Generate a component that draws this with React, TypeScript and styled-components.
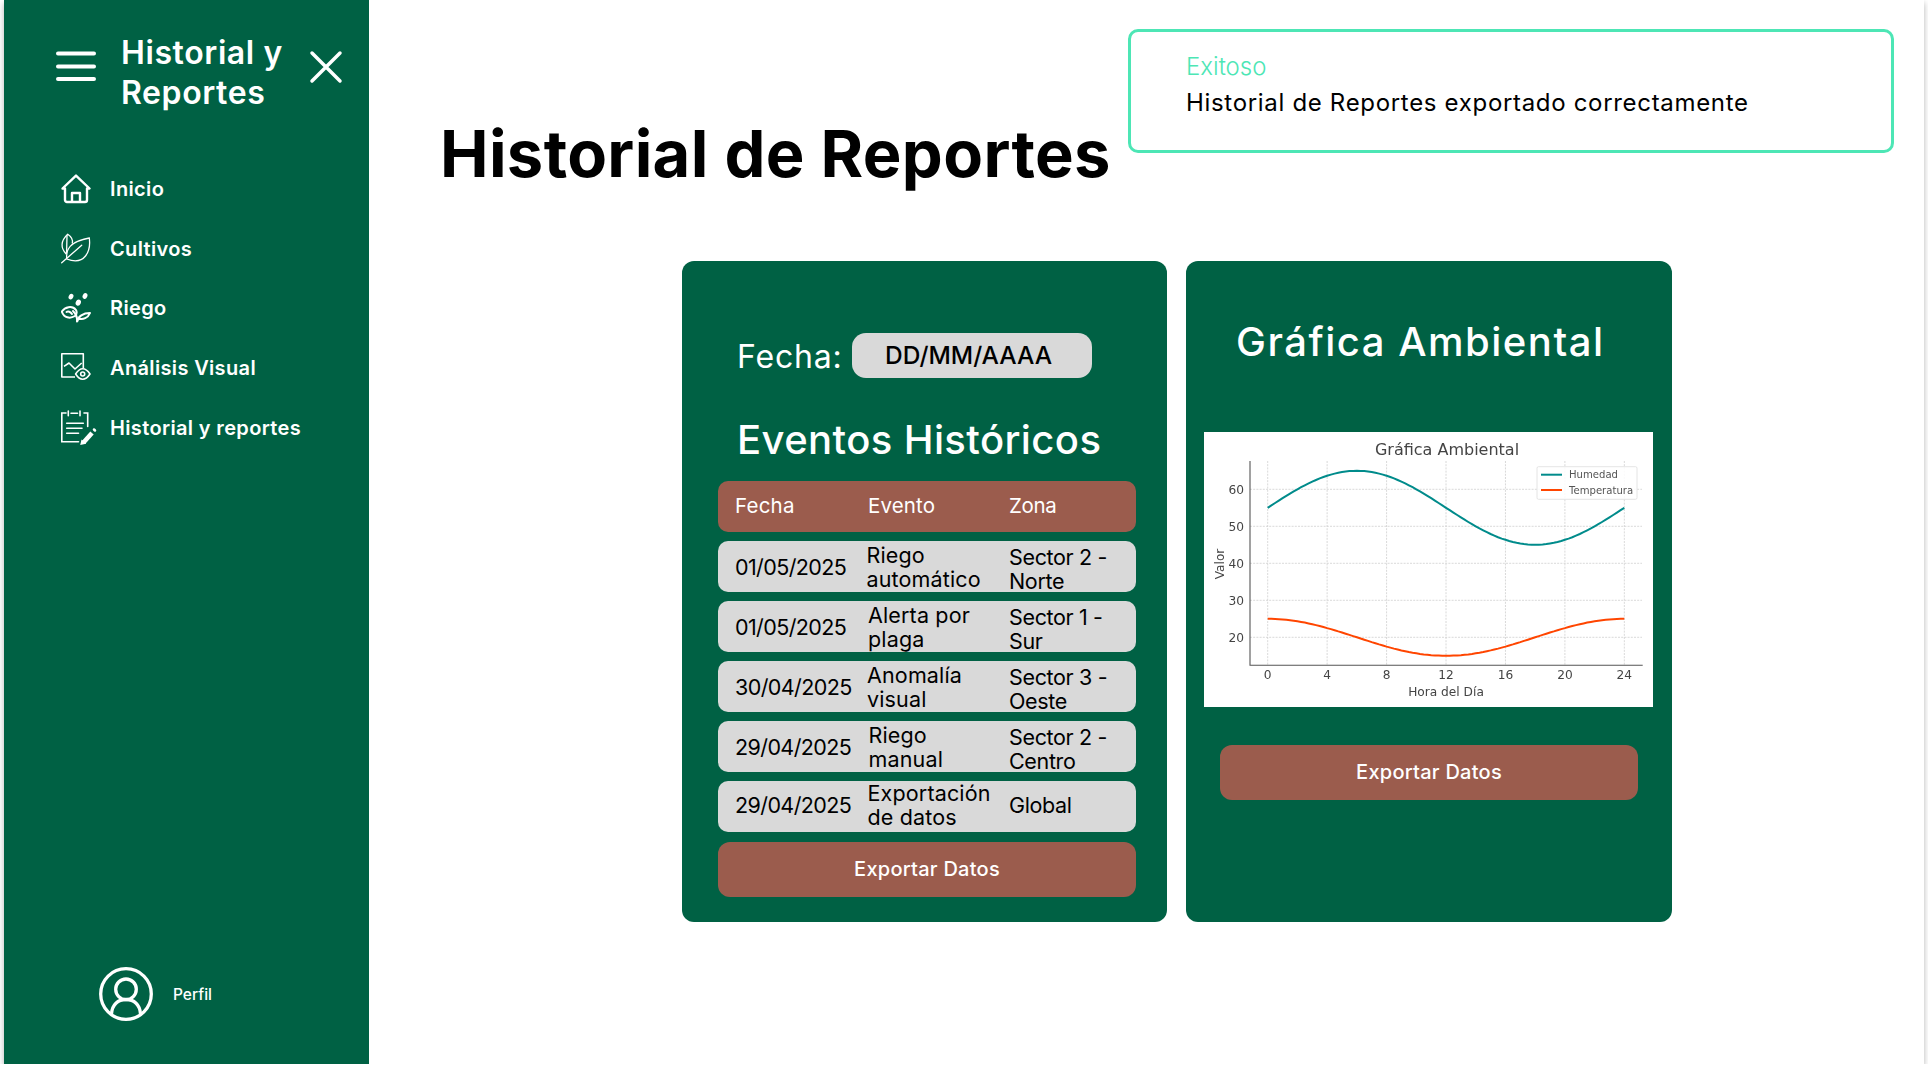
import * as React from 'react'
import styled, { createGlobalStyle } from 'styled-components'

const GlobalStyle = createGlobalStyle`
  html, body {
    margin: 0;
    background: #fff;
  }
  body {
    font-family: Inter, "Noto Sans", sans-serif;
    color: #000;
  }
`

const GREEN = '#006144'
const BROWN = '#9b5c4d'
const GREY = '#d9d9d9'
const MINT = '#4de6b5'

const Screen = styled.div`
  display: flex;
  width: 1920px;
  height: 1064px;
  margin-left: 4px;
  background: #fff;
  box-shadow: 0 3px 6px rgba(0, 0, 0, 0.3);
  position: relative;
`

const Sidebar = styled.aside`
  width: 365px;
  flex: none;
  background: ${GREEN};
  color: #fff;
  display: flex;
  flex-direction: column;
`

const SideHeader = styled.header`
  display: flex;
  align-items: flex-start;
  padding: 33px 0 0 52px;
`

const SideTitle = styled.div`
  width: 188px;
  margin-left: 25px;
  font-size: 32px;
  line-height: 40px;
  font-weight: 600;
  letter-spacing: 0.6px;
`

const MenuButton = styled.svg`
  width: 40px;
  height: 34px;
  margin-top: 16px;
  flex: none;
`

const CloseButton = styled.svg`
  width: 34px;
  height: 34px;
  margin-top: 17px;
  flex: none;
`

const Nav = styled.nav`
  display: flex;
  flex-direction: column;
  margin-top: 46px;
`

const NavItem = styled.a`
  display: flex;
  align-items: center;
  height: 59.8px;
  padding-left: 57px;
  font-size: 20px;
  font-weight: 600;
  letter-spacing: 0.35px;
`

const NavIcon = styled.span`
  width: 49px;
  flex: none;
  display: flex;
  align-items: center;
`

const Profile = styled.div`
  margin-top: auto;
  margin-bottom: 43px;
  padding-left: 95px;
  display: flex;
  align-items: center;
  gap: 20px;
  font-size: 15.5px;
  font-weight: 500;
`

const Main = styled.main`
  flex: 1;
  display: flex;
  flex-direction: column;
  padding: 115px 0 0 71px;
`

const PageTitle = styled.h1`
  margin: 0;
  font-size: 65px;
  line-height: 78px;
  font-weight: 700;
  letter-spacing: 0.35px;
`

const Toast = styled.div`
  position: absolute;
  top: 29px;
  left: 1124px;
  width: 766px;
  height: 124px;
  box-sizing: border-box;
  border: 3px solid ${MINT};
  border-radius: 10px;
  padding: 17px 0 0 55px;
  font-size: 24px;
  line-height: 36px;
`

const ToastTitle = styled.div`
  color: ${MINT};
  font-weight: 300;
`

const ToastMessage = styled.div`
  letter-spacing: 0.68px;
`

const Cards = styled.section`
  display: flex;
  gap: 19px;
  margin: 68px 0 0 242px;
`

const Card = styled.div<{ $width: number }>`
  width: ${p => p.$width}px;
  height: 661px;
  box-sizing: border-box;
  background: ${GREEN};
  border-radius: 12px;
  color: #fff;
  display: flex;
  flex-direction: column;
  align-items: flex-start;
`

const LeftCard = styled(Card)`
  padding: 72px 31px 0 36px;
`

const RightCard = styled(Card)`
  padding: 51px 0 0 18px;
`

const DateRow = styled.div`
  display: flex;
  align-items: flex-start;
  height: 45px;
  padding-left: 19px;
`

const DateLabel = styled.label`
  width: 115px;
  height: 45px;
  font-size: 32px;
  line-height: 47px;
  letter-spacing: 0.8px;
`

const DateInput = styled.div`
  width: 240px;
  height: 45px;
  box-sizing: border-box;
  padding-left: 33px;
  background: ${GREY};
  border-radius: 14px;
  color: #000;
  font-size: 24.5px;
  font-weight: 500;
  line-height: 45px;
`

const CardTitle = styled.h2<{ $indent: number; $top: number; $spacing: number }>`
  margin: ${p => p.$top}px 0 0 ${p => p.$indent}px;
  font-size: 40px;
  line-height: 60px;
  font-weight: 500;
  letter-spacing: ${p => p.$spacing}px;
`

const Table = styled.div`
  display: flex;
  flex-direction: column;
  gap: 9px;
  width: 418px;
  margin-top: 11px;
`

const TableRow = styled.div<{ $head?: boolean }>`
  display: grid;
  grid-template-columns: 131px 1fr 127px;
  align-items: center;
  height: 51px;
  box-sizing: border-box;
  padding: 0 0 ${p => (p.$head ? 2 : 4)}px 17px;
  border-radius: 10px;
  line-height: 24px;
  background: ${p => (p.$head ? BROWN : GREY)};
  color: ${p => (p.$head ? '#fff' : '#000')};
  font-size: ${p => (p.$head ? 20.5 : 21.5)}px;
`

const DateCell = styled.div<{ $head?: boolean }>`
  letter-spacing: ${p => (p.$head ? 0.2 : -0.6)}px;
`

const EventCell = styled.div<{ $shift: number }>`
  white-space: pre-line;
  margin-left: ${p => p.$shift}px;
  letter-spacing: 0.15px;
`

const ZoneCell = styled.div<{ $nudge?: boolean }>`
  white-space: pre-line;
  padding-top: ${p => (p.$nudge ? 4 : 0)}px;
  letter-spacing: -0.35px;
`

const ExportButton = styled.button`
  display: block;
  width: 418px;
  height: 55px;
  border: 0;
  border-radius: 12px;
  padding: 0 0 2px;
  background: ${BROWN};
  color: #fff;
  font-family: inherit;
  font-size: 20px;
  font-weight: 500;
  letter-spacing: 0.25px;
`

const TableButton = styled(ExportButton)`
  margin-top: 10px;
`

const ChartButton = styled(ExportButton)`
  margin: 38px 0 0 16px;
`

const ChartFrame = styled.svg`
  display: block;
  margin-top: 60px;
  width: 449px;
  height: 275px;
  background: #fff;
  font-family: "DejaVu Sans", sans-serif;
  filter: blur(0.3px);
`

const chartX = (hour: number) => 63.7 + hour * 14.86
const chartY = (value: number) => 57.3 + (60 - value) * 3.7

const curve = (fn: (t: number) => number) =>
  Array.from({ length: 97 }, (_, i) => {
    const t = i / 4
    return `${chartX(t).toFixed(1)},${chartY(fn(t)).toFixed(1)}`
  }).join(' ')

const Chart = () => (
  <ChartFrame viewBox="0 0 449 275">
    <g stroke="#cfcfcf" strokeWidth="0.8" strokeDasharray="2 1.2">
      {[0, 4, 8, 12, 16, 20, 24].map(h => (
        <line key={h} x1={chartX(h)} x2={chartX(h)} y1="29" y2="233" />
      ))}
      {[20, 30, 40, 50, 60].map(v => (
        <line key={v} x1="46" x2="438" y1={chartY(v)} y2={chartY(v)} />
      ))}
    </g>
    <polyline
      points={curve(t => 55 + 10 * Math.sin((2 * Math.PI * t) / 24))}
      fill="none"
      stroke="#008b8b"
      strokeWidth="2"
    />
    <polyline
      points={curve(t => 20 + 5 * Math.cos((2 * Math.PI * t) / 24))}
      fill="none"
      stroke="#ff4500"
      strokeWidth="2"
    />
    <path d="M46 29V233.3H438.7" fill="none" stroke="#555" strokeWidth="1.1" />
    <g fill="#444" fontSize="12.2">
      {[0, 4, 8, 12, 16, 20, 24].map(h => (
        <text key={h} x={chartX(h)} y="246.5" textAnchor="middle">{h}</text>
      ))}
      {[20, 30, 40, 50, 60].map(v => (
        <text key={v} x="40" y={chartY(v) + 4.5} textAnchor="end">{v}</text>
      ))}
      <text x="242" y="263.5" textAnchor="middle">Hora del Día</text>
      <text textAnchor="middle" transform="translate(20 132) rotate(-90)">Valor</text>
      <text x="243" y="22.5" textAnchor="middle" fontSize="16">Gráfica Ambiental</text>
    </g>
    <rect x="333" y="34.7" width="100" height="32.6" rx="1.5" fill="#fff" fillOpacity="0.85" stroke="#ddd" strokeWidth="0.8" />
    <line x1="337" x2="358" y1="42.7" y2="42.7" stroke="#008b8b" strokeWidth="2" />
    <line x1="337" x2="358" y1="58" y2="58" stroke="#ff4500" strokeWidth="2" />
    <g fill="#555" fontSize="10.1">
      <text x="365" y="46.3">Humedad</text>
      <text x="365" y="61.6">Temperatura</text>
    </g>
  </ChartFrame>
)

const HomeIcon = () => (
  <svg width="30" height="30" viewBox="0 0 30 30" fill="none" stroke="#fff" strokeWidth="2.4" strokeLinejoin="round">
    <path d="M1.5 14.5 15 1.6 28.5 14.5H26V26a2 2 0 0 1-2 2H6a2 2 0 0 1-2-2V14.5Z" />
    <path d="M11 28V19H19V28" />
  </svg>
)

const LeafIcon = () => (
  <svg width="30" height="32" viewBox="0 0 30 32" fill="none" stroke="#fff" strokeWidth="1.3" strokeLinecap="round">
    <path d="M.7 29.7 20.7 12.3" />
    <path d="M5.7 25C5 17 8 8.5 28.3 5 30 18 24 33 5.7 26" />
    <path d="M5 20.7C-.5 15 -.5 8 6.7 1.3 10 3.5 12 6.5 11.3 10" />
    <path d="M6 2.5 5.6 20" />
  </svg>
)

const SproutIcon = () => (
  <svg width="30" height="30" viewBox="0 0 30 30" fill="none" stroke="#fff" strokeWidth="2" strokeLinecap="round" strokeLinejoin="round">
    <path d="M16 28.5C16.5 24 14 20 12 18" />
    <path d="M16.5 28C17 23.5 22 20 29 20 27 25 22 27 17.5 25.5" />
    <path d="M14 23C9 26 3 25 .8 18.5 4 14 11 12 15 17 16 19 15.5 21.5 14 23Z" />
    <path d="M5.5 19C7 18 9.500 18.500 11 21" />
    <g fill="#fff" stroke="none">
      <ellipse cx="10" cy="3.600" rx="2.300" ry="3" transform="rotate(25 10 3.600)" />
      <ellipse cx="24" cy="3" rx="2.300" ry="3" transform="rotate(25 24 3)" />
      <ellipse cx="17.300" cy="9.600" rx="2.500" ry="3.200" transform="rotate(25 17.300 9.600)" />
    </g>
  </svg>
)

const VisualIcon = () => (
  <svg width="30" height="30" viewBox="0 0 30 30" fill="none" stroke="#fff" strokeWidth="1.6" strokeLinejoin="round">
    <path d="M14 24H.8V.8H22.300V15" />
    <path d="M3 13.300 8 10 14 16 20.700 10" />
    <path d="M14.600 21C17 17.300 19.500 15.800 21.700 15.800S26.500 17.300 29 21C26.500 24.700 24 26.200 21.700 26.200S17 24.700 14.600 21Z" />
    <circle cx="21.700" cy="21" r="2" />
  </svg>
)

const ReportIcon = () => (
  <svg width="36" height="36" viewBox="0 0 36 36" fill="none" stroke="#fff" strokeWidth="1.6" strokeLinecap="round">
    <path d="M5 3H.8V31.700H17.500" />
    <path d="M23 3H26.700V16.500" />
    <path d="M7.300 1V5.700M19 1V5.700M10 3.300H16.500" />
    <path d="M5.700 13.300H22.300M5.700 18.300H21M5.700 23.300H17.500" />
    <path d="M31 23 22.500 32.500" strokeWidth="4.500" strokeLinecap="butt" />
    <path d="M21 31 20.300 34 23.500 33.300Z" fill="#fff" />
    <path d="M33 19.500 34 20.500" strokeWidth="2.500" />
  </svg>
)

const ProfileIcon = () => (
  <svg width="54" height="54" viewBox="0 0 54 54" fill="none" stroke="#fff" strokeWidth="3.300" style={{ flex: 'none' }}>
    <circle cx="27" cy="27" r="25.300" />
    <circle cx="27" cy="22.300" r="10.300" />
    <path d="M12.500 47C13 37.500 19 32.500 27 32.500S41 37.500 41.500 47" />
  </svg>
)

const navItems = [
  { label: 'Inicio', icon: <HomeIcon /> },
  { label: 'Cultivos', icon: <LeafIcon /> },
  { label: 'Riego', icon: <SproutIcon /> },
  { label: 'Análisis Visual', icon: <VisualIcon /> },
  { label: 'Historial y reportes', icon: <ReportIcon /> },
]

const rows = [
  { date: '01/05/2025', event: 'Riego\nautomático', zone: 'Sector 2 -\nNorte', shift: 0.5 },
  { date: '01/05/2025', event: 'Alerta por\nplaga', zone: 'Sector 1 -\nSur', shift: 2 },
  { date: '30/04/2025', event: 'Anomalía\nvisual', zone: 'Sector 3 -\nOeste', shift: 1 },
  { date: '29/04/2025', event: 'Riego\nmanual', zone: 'Sector 2 -\nCentro', shift: 2.5 },
  { date: '29/04/2025', event: 'Exportación\nde datos', zone: 'Global', shift: 1.5 },
]

const App: React.FC = () => {
  return (
    <>
      <GlobalStyle />
      <Screen>
        <Sidebar>
          <SideHeader>
            <MenuButton viewBox="0 0 40 34" fill="none" stroke="#fff" strokeWidth="4" strokeLinecap="round">
              <path d="M2 4.500H38M2 17.500H38M2 30H38" />
            </MenuButton>
            <SideTitle>Historial y Reportes</SideTitle>
            <CloseButton viewBox="0 0 34 34" fill="none" stroke="#fff" strokeWidth="3.500" strokeLinecap="round">
              <path d="M3 3 31 31M31 3 3 31" />
            </CloseButton>
          </SideHeader>
          <Nav>
            {navItems.map(({ label, icon }) => (
              <NavItem key={label}>
                <NavIcon>{icon}</NavIcon>
                {label}
              </NavItem>
            ))}
          </Nav>
          <Profile>
            <ProfileIcon />
            Perfil
          </Profile>
        </Sidebar>
        <Main>
          <PageTitle>Historial de Reportes</PageTitle>
          <Cards>
            <LeftCard $width={485}>
              <DateRow>
                <DateLabel>Fecha:</DateLabel>
                <DateInput>DD/MM/AAAA</DateInput>
              </DateRow>
              <CardTitle $indent={19} $top={32} $spacing={0.4}>Eventos Históricos</CardTitle>
              <Table>
                <TableRow $head>
                  <DateCell $head>Fecha</DateCell>
                  <EventCell $shift={2}>Evento</EventCell>
                  <ZoneCell>Zona</ZoneCell>
                </TableRow>
                {rows.map(({ date, event, zone, shift }, idx) => (
                  <TableRow key={`row-${idx}`}>
                    <DateCell>{date}</DateCell>
                    <EventCell $shift={shift}>{event}</EventCell>
                    <ZoneCell $nudge={zone.includes('\n')}>{zone}</ZoneCell>
                  </TableRow>
                ))}
              </Table>
              <TableButton>Exportar Datos</TableButton>
            </LeftCard>
            <RightCard $width={486}>
              <CardTitle $indent={32} $top={0} $spacing={1.5}>Gráfica Ambiental</CardTitle>
              <Chart />
              <ChartButton>Exportar Datos</ChartButton>
            </RightCard>
          </Cards>
        </Main>
        <Toast>
          <ToastTitle>Exitoso</ToastTitle>
          <ToastMessage>Historial de Reportes exportado correctamente</ToastMessage>
        </Toast>
      </Screen>
    </>
  )
}

export default App
